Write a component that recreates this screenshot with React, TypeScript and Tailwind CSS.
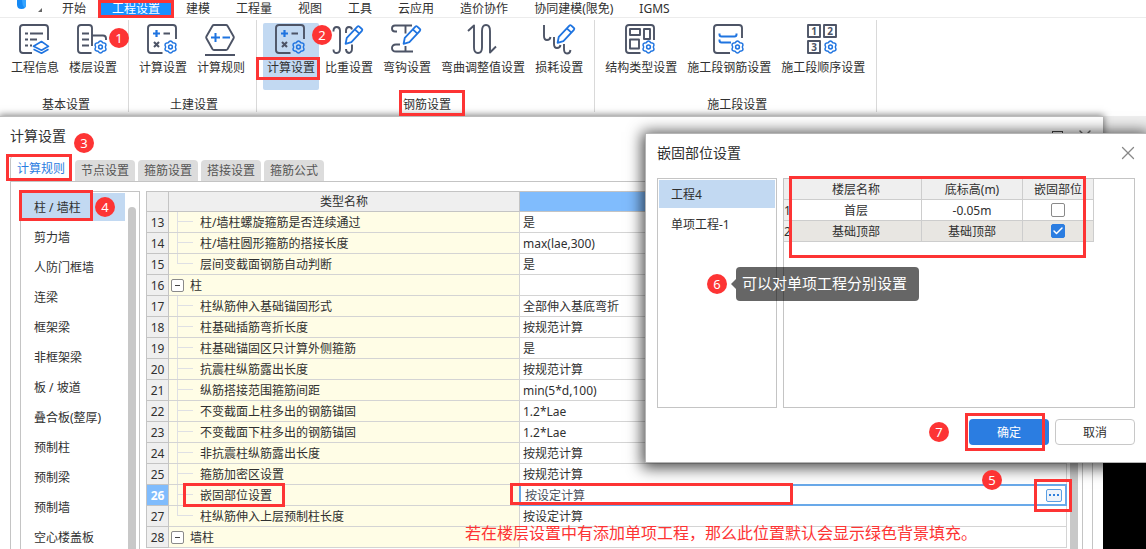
import type { ReactNode } from "react"
import { useState } from "react"
import { Check, X } from "lucide-react"
import clsx from "clsx"

const INK = "#4d5466"
const BLUE = "#1f74e0"

const menus = ["开始", "工程设置", "建模", "工程量", "视图", "工具", "云应用", "造价协作", "协同建模(限免)", "IGMS"]

const tabs = ["计算规则", "节点设置", "箍筋设置", "搭接设置", "箍筋公式"]

const components = [
  "柱 / 墙柱",
  "剪力墙",
  "人防门框墙",
  "连梁",
  "框架梁",
  "非框架梁",
  "板 / 坡道",
  "叠合板(整厚)",
  "预制柱",
  "预制梁",
  "预制墙",
  "空心楼盖板",
]

type Rule = { no: number; name: string; value?: string; group?: boolean; last?: boolean }

const rules: Rule[] = [
  { no: 13, name: "柱/墙柱螺旋箍筋是否连续通过", value: "是" },
  { no: 14, name: "柱/墙柱圆形箍筋的搭接长度", value: "max(lae,300)" },
  { no: 15, name: "层间变截面钢筋自动判断", value: "是", last: true },
  { no: 16, name: "柱", group: true },
  { no: 17, name: "柱纵筋伸入基础锚固形式", value: "全部伸入基底弯折" },
  { no: 18, name: "柱基础插筋弯折长度", value: "按规范计算" },
  { no: 19, name: "柱基础锚固区只计算外侧箍筋", value: "是" },
  { no: 20, name: "抗震柱纵筋露出长度", value: "按规范计算" },
  { no: 21, name: "纵筋搭接范围箍筋间距", value: "min(5*d,100)" },
  { no: 22, name: "不变截面上柱多出的钢筋锚固", value: "1.2*Lae" },
  { no: 23, name: "不变截面下柱多出的钢筋锚固", value: "1.2*Lae" },
  { no: 24, name: "非抗震柱纵筋露出长度", value: "按规范计算" },
  { no: 25, name: "箍筋加密区设置", value: "按规范计算" },
  { no: 26, name: "嵌固部位设置", value: "按设定计算" },
  { no: 27, name: "柱纵筋伸入上层预制柱长度", value: "按设定计算", last: true },
  { no: 28, name: "墙柱", group: true },
]

/* ---------- annotations ---------- */

function Mark({ className }: { className: string }) {
  return <span className={clsx("pointer-events-none absolute z-30 border-3 border-[#fd3434]", className)} />
}

function Badge({ n, className }: { n: number; className: string }) {
  return (
    <span
      className={clsx(
        "pointer-events-none absolute z-30 flex size-5 items-center justify-center rounded-full bg-[#fd3434] text-[13px] leading-5 text-white",
        className,
      )}
    >
      {n}
    </span>
  )
}

/* ---------- ribbon icons ---------- */

function Icon({ children }: { children: ReactNode }) {
  return (
    <svg
      viewBox="0 0 30 30"
      className="mr-0.5 size-[30px] overflow-visible"
      fill="none"
      stroke={INK}
      strokeWidth="1.9"
      strokeLinecap="butt"
      strokeLinejoin="round"
      aria-hidden="true"
    >
      {children}
    </svg>
  )
}

function Gear({ x = 23.5, y = 23 }: { x?: number; y?: number }) {
  return (
    <g transform={`translate(${x} ${y})`} stroke={BLUE} strokeWidth="1.5">
      <path d="M4.8 0Q6.93 4 2.4 4.16Q0 8-2.4 4.16Q-6.93 4-4.8 0Q-6.93-4-2.4-4.16Q0-8 2.4-4.16Q6.93-4 4.8 0Z" />
      <circle r="1.9" />
    </g>
  )
}

function Pencil({ x = 0, y = 0 }: { x?: number; y?: number }) {
  return (
    <g transform={`translate(${x} ${y})`} stroke={BLUE} strokeWidth="1.8">
      <path d="M12.6 19.8L13.8 13.8 24.4 2.6q.9-.9 1.9 0l2.6 2.4q.9.9 0 1.9L18.4 18.2z" />
      <path d="M21.8 5.4l4.6 4.3" />
    </g>
  )
}

function InfoIcon() {
  return (
    <Icon>
      <path d="M13 29H4q-3 0-3-3V4q0-3 3-3h22q3 0 3 3v12" />
      <path d="M6 9.5h3M11 9.5h13M6 15.5h3M11 15.5h7M6 21.5h3M11 21.5h2" />
      <path d="M14.5 22.3L22.5 17.5l7 4.8-7 4z M14.5 25.2l8 4 7-4" stroke={BLUE} strokeWidth="1.6" />
    </Icon>
  )
}

function FloorIcon() {
  return (
    <Icon>
      <path d="M14.5 29H4q-3 0-3-3V4q0-3 3-3h8q3 0 3 3v18M15 11.5h11q3 0 3 3v1.5" />
      <path d="M5 9.5h7M5 15.5h7M5 21.5h7" />
      <Gear />
    </Icon>
  )
}

function CalcIcon() {
  return (
    <Icon>
      <path d="M15.5 29H4q-3 0-3-3V4q0-3 3-3h22q3 0 3 3v11" />
      <path d="M6 9.5h7M9.5 6v7" stroke={BLUE} strokeWidth="2.2" />
      <path d="M16.5 9.5H23M7 18l5 5M12 18l-5 5" strokeWidth="2.1" />
      <Gear />
    </Icon>
  )
}

function RuleIcon() {
  return (
    <Icon>
      <path d="M9 1h12q1 0 1.6 1l6 10.5q.5.9 0 1.8L22.6 25q-.6 1-1.6 1H9q-1 0-1.6-1L1.4 14.3q-.5-.9 0-1.8L7.4 2Q8 1 9 1z" />
      <path d="M0 31h30" strokeWidth="2" />
      <path d="M6 13.5h9M10.5 9v9M17.5 13.5H25" stroke={BLUE} strokeWidth="2" />
    </Icon>
  )
}

function WeightIcon() {
  return (
    <Icon>
      <path d="M.5 7.5V6.5Q.5 3 3.7 3T7 6.5V24.5Q7 29 3.700 29T.5 25.500M13 9V6.500Q13 3 16 3q2.500 0 3 2.500M19 20.500v4q0 4-3 4.500-3-.5-3-4" />
      <Pencil />
    </Icon>
  )
}

function HookIcon() {
  return (
    <Icon>
      <path d="M21 1.5H4q-3 0-3 3t3 3h2M14.5 1.5v8M9 20.5H5q-4 0-4 3.5t4 3.5h17M14.5 22v5" />
      <Pencil />
    </Icon>
  )
}

function BendIcon() {
  return (
    <Icon>
      <path d="M1 7l6-5.5V23.5q0 5.500 4 5.500t4-5.500V7q0-6 4-6t4 6V28.500l6-6" />
    </Icon>
  )
}

function LossIcon() {
  return (
    <Icon>
      <path d="M1 1v11q0 4 3 4t3.5-3M11 13v7q0 4 3 4t3.5-3M21 20v5q0 4.5 3 4.5t3.5-3.5" />
      <Pencil x={2} y={-1} />
    </Icon>
  )
}

function StructureIcon() {
  return (
    <Icon>
      <path d="M15.5 29H4q-3 0-3-3V4q0-3 3-3h22q3 0 3 3v12" />
      <path d="M5 5h10v6H5zM19 5h6v10h-6zM5 15.5h9v9H5z" />
      <Gear />
    </Icon>
  )
}

function SegmentIcon() {
  return (
    <Icon>
      <path d="M17 29H4q-3 0-3-3V4q0-3 3-3h22q3 0 3 3v10" />
      <path d="M6.5 9.5v1q0 2 2 2h13q2 0 2-2v-1M6.5 15.5v1q0 2 2 2H18" stroke={BLUE} strokeWidth="2" />
      <Gear x={24.5} />
    </Icon>
  )
}

function OrderIcon() {
  return (
    <Icon>
      <path d="M1 1h12v12H1zM17 1h12v12H17zM1 17h12v12H1z" />
      <g fill={INK} stroke="none" fontSize="10" fontWeight="700" textAnchor="middle">
        <text x="7" y="10.6">1</text>
        <text x="23" y="10.6">2</text>
        <text x="7" y="26.6">3</text>
      </g>
      <Gear />
    </Icon>
  )
}

/* ---------- ribbon ---------- */

type ToolProps = { label: string; icon: ReactNode; active?: boolean; children?: ReactNode }

function Tool({ label, icon, active, children }: ToolProps) {
  return (
    <button
      type="button"
      className={clsx(
        "relative mx-px flex h-[67px] flex-col items-center rounded-xs px-1 pt-px whitespace-nowrap",
        active && "bg-[#c2d9f2]",
      )}
    >
      {icon}
      <span className="mt-1 leading-5">{label}</span>
      {children}
    </button>
  )
}

function ToolGroup({ title, marked, children }: { title: string; marked?: boolean; children: ReactNode }) {
  return (
    <div className="flex flex-col items-center border-r border-[#d9d9d9] pr-1.5 pl-[5px]">
      <div className="flex pt-[3px]">{children}</div>
      <div className="relative mt-[5px] ml-1 leading-5">
        {title}
        {marked && <Mark className="-top-[5px] -right-3.5 -left-1 h-[26px]" />}
      </div>
    </div>
  )
}

function Ribbon() {
  return (
    <header>
      <nav className="flex h-[18px] items-center border-b border-[#ececec] pl-4">
        <svg viewBox="0 0 33 18" className="h-[18px] w-[33px] shrink-0" aria-hidden="true">
          <path d="M1-4h9v8.500q0 4.500-4.500 4.500T1 4.500z" fill="#1489f5" />
          <path d="M6-4h4v8.500q0 2.500-1.500 3.500Q6 5 6 0z" fill="#36a4ff" />
          <path d="M26 8v4h-4z" fill="#666" />
        </svg>
        {menus.map((m) => (
          <button
            key={m}
            type="button"
            className={clsx("relative h-[17px] px-[13px] leading-[17px] whitespace-nowrap", m === "工程设置" && "bg-[#1890ff] text-white")}
          >
            {m}
            {m === "工程设置" && <Mark className="-inset-x-px top-0 -bottom-px" />}
          </button>
        ))}
      </nav>
      <div className="flex h-[98px] pt-0.5 pb-1 pl-px">
        <ToolGroup title="基本设置">
          <Tool label="工程信息" icon={<InfoIcon />} />
          <Tool label="楼层设置" icon={<FloorIcon />}>
            <Badge n={1} className="top-[5px] -right-2" />
          </Tool>
        </ToolGroup>
        <ToolGroup title="土建设置">
          <Tool label="计算设置" icon={<CalcIcon />} />
          <Tool label="计算规则" icon={<RuleIcon />} />
        </ToolGroup>
        <ToolGroup title="钢筋设置" marked>
          <Tool label="计算设置" icon={<CalcIcon />} active>
            <Mark className="top-[34px] -right-px -left-[7px] h-[23px]" />
            <Badge n={2} className="top-0.5 -right-[13px]" />
          </Tool>
          <Tool label="比重设置" icon={<WeightIcon />} />
          <Tool label="弯钩设置" icon={<HookIcon />} />
          <Tool label="弯曲调整值设置" icon={<BendIcon />} />
          <Tool label="损耗设置" icon={<LossIcon />} />
        </ToolGroup>
        <ToolGroup title="施工段设置">
          <Tool label="结构类型设置" icon={<StructureIcon />} />
          <Tool label="施工段钢筋设置" icon={<SegmentIcon />} />
          <Tool label="施工段顺序设置" icon={<OrderIcon />} />
        </ToolGroup>
      </div>
    </header>
  )
}

/* ---------- calculation settings window ---------- */

function TreeCell({ rule }: { rule: Rule }) {
  if (rule.group) {
    return (
      <div className="flex h-5 items-center gap-1.5 pl-0.5">
        <button
          type="button"
          aria-label="收起"
          className="flex size-[13px] items-center justify-center rounded-xs border border-[#8a8a8a] bg-white"
        >
          <span className="h-px w-[5px] bg-[#444]" />
        </button>
        <span className="pt-0.5 leading-[18px]">{rule.name}</span>
      </div>
    )
  }
  return (
    <div className="flex h-5 items-center gap-[7px] pl-2">
      <span className="grid h-full w-4 grid-rows-2">
        <span className="border-b border-l border-[#dfe0e4]" />
        <span className={clsx(!rule.last && "border-l border-[#dfe0e4]")} />
      </span>
      <span className="relative pt-0.5 leading-[18px]">
        {rule.name}
        {rule.no === 26 && <Mark className="-top-0.5 -right-[13px] -left-[17px] h-6" />}
      </span>
    </div>
  )
}

function RuleTable() {
  return (
    <table className="w-full table-fixed border-separate border-spacing-0 border-t border-l border-[#c4c4c4]">
      <colgroup>
        <col className="w-[22px]" />
        <col className="w-[351px]" />
        <col />
      </colgroup>
      <thead>
        <tr className="h-5 bg-[#efefef]">
          <th className="border-r border-b border-[#c4c4c4] p-0" />
          <th className="border-r border-b border-[#c4c4c4] p-0 pt-px leading-[18px] font-normal">类型名称</th>
          <th className="border-r border-b border-[#c4c4c4] bg-[#80bcfd] p-0" />
        </tr>
      </thead>
      <tbody>
        {rules.map((r) => {
          const current = r.no === 26
          return (
            <tr key={r.no} className="h-[21px]">
              <td
                className={clsx(
                  "border-r border-b border-[#c4c4c4] p-0 pt-0.5 text-center leading-[18px]",
                  current ? "bg-[#80bcfd] font-bold text-white" : "bg-[#efefef]",
                )}
              >
                {r.no}
              </td>
              <td className="border-r border-b border-[#d4d4d4] bg-[#fffde6] p-0">
                <TreeCell rule={r} />
              </td>
              <td className="relative border-r border-b border-[#d4d4d4] bg-white p-0 pt-0.5 pl-[3px] leading-[18px]">
                {current ? (
                  <div className="absolute -inset-px flex items-center border-2 border-[#69a9e9] pl-1">
                    <input
                      aria-label={r.name}
                      defaultValue={r.value}
                      className="h-[17px] min-w-0 flex-1 pt-px text-[#4a4f5c] outline-none"
                    />
                    <button
                      type="button"
                      aria-label="更多"
                      className="relative mr-[3px] flex h-[13px] w-4 items-center justify-center gap-0.5 rounded-xs border border-[#5b9fe3] bg-[#eef3fa]"
                    >
                      <i className="size-0.5 bg-[#2f7fdc]" />
                      <i className="size-0.5 bg-[#2f7fdc]" />
                      <i className="size-0.5 bg-[#2f7fdc]" />
                      <Mark className="-top-[11px] -right-[11px] h-[33px] w-[38px]" />
                      <Badge n={5} className="-top-5 right-[59px]" />
                    </button>
                    <Mark className="-top-[3px] -left-[11px] h-[22px] w-[283px]" />
                  </div>
                ) : (
                  r.value
                )}
              </td>
            </tr>
          )
        })}
      </tbody>
    </table>
  )
}

function CalcWindow() {
  const [tab, setTab] = useState(tabs[0])
  const [picked, setPicked] = useState(components[0])

  return (
    <section className="relative mr-[43px] flex min-h-0 flex-1 flex-col border-t border-[#bdbdbd] bg-white shadow-[0_0_7px_1px_rgba(0,0,0,0.5)]">
      <div className="flex h-[38px] items-center justify-between pr-2 pl-2.5">
        <h1 className="relative text-sm leading-5">
          计算设置
          <Badge n={3} className="top-[7px] -right-7" />
        </h1>
        <div className="flex items-center gap-3 text-[#666]">
          <button type="button" aria-label="最大化" className="size-[11px] border border-[#444]" />
          <button type="button" aria-label="关闭">
            <X size={20} strokeWidth={1.6} />
          </button>
        </div>
      </div>

      <div role="tablist" className="flex h-[26px] items-end gap-[3px] px-2.5">
        {tabs.map((t) => (
          <button
            key={t}
            type="button"
            role="tab"
            aria-selected={t === tab}
            onClick={() => setTab(t)}
            className={clsx(
              "relative h-[21px] rounded-t-sm px-1.5 leading-[21px]",
              t === tab ? "mr-px h-[25px] border-l border-[#c4c4c4] text-[#2b7de1]" : "bg-[#dcdcdc] text-[#555]",
            )}
          >
            {t}
            {t === tabs[0] && <Mark className="-top-0.5 -right-px -left-[5px] h-[27px]" />}
          </button>
        ))}
      </div>

      <div className="mx-2.5 flex min-h-0 flex-1 gap-1.5 overflow-hidden border-x border-t border-[#c4c4c4] px-[9px] pt-[9px]">
        <div className="flex w-[120px] shrink-0 border-x border-t border-[#c4c4c4] pt-px pl-px">
          <ul className="w-[103px]">
            {components.map((c) => (
              <li key={c} className="mb-0.5">
                <button
                  type="button"
                  onClick={() => setPicked(c)}
                  className={clsx("relative h-7 w-full pt-0.5 pl-3 text-left leading-[26px]", c === picked && "bg-[#c2d9f2]")}
                >
                  {c}
                  {c === components[0] && (
                    <>
                      <Mark className="-top-[3px] -left-[3px] h-[31px] w-[74px]" />
                      <Badge n={4} className="top-1 right-2.5" />
                    </>
                  )}
                </button>
              </li>
            ))}
          </ul>
          <div className="mt-3.5 ml-[3px] w-2 rounded-t-full bg-[#c8c8c8]" />
        </div>
        <div className="flex min-w-0 flex-1 items-stretch gap-[3px] border-r border-[#c4c4c4] pr-1">
          <div className="min-w-0 flex-1">
            <RuleTable />
          </div>
          <div className="w-2 bg-[#c8c8c8]" />
        </div>
      </div>

      <p className="absolute top-[408px] left-[465px] text-base leading-4 whitespace-nowrap text-[#fd3434]">
        若在楼层设置中有添加单项工程，那么此位置默认会显示绿色背景填充。
      </p>
    </section>
  )
}

/* ---------- fixed-end dialog ---------- */

function Tick({ label, checked }: { label: string; checked?: boolean }) {
  return (
    <label className="mx-auto grid size-3.5 place-items-center">
      <input
        type="checkbox"
        aria-label={label}
        defaultChecked={checked}
        className="peer col-start-1 row-start-1 size-3.5 appearance-none rounded-xs border border-[#8a8a8a] bg-white checked:border-[#2b7de1] checked:bg-[#2b7de1]"
      />
      <Check
        size={12}
        strokeWidth={3}
        className="pointer-events-none col-start-1 row-start-1 text-white opacity-0 peer-checked:opacity-100"
      />
    </label>
  )
}

function FixedDialog() {
  const floors = [
    { name: "首层", level: "-0.05m", fixed: false },
    { name: "基础顶部", level: "基础顶部", fixed: true },
  ]
  const cell = "border-r border-b border-[#cdcdcd] p-0 text-center font-normal"
  const textCell = "border-r border-b border-[#cdcdcd] p-0 pt-0.5 text-center leading-[18px] font-normal"

  return (
    <section
      role="dialog"
      aria-label="嵌固部位设置"
      className="absolute top-[133px] right-0 z-20 flex h-[330px] w-[501px] flex-col border-y border-l border-[#b5b5b5] bg-white pr-[11px] pb-[17px] pl-[11px] shadow-[0_2px_14px_3px_rgba(0,0,0,0.7)]"
    >
      <div className="flex h-11 items-center justify-between pb-1.5">
        <h2 className="text-sm leading-5">嵌固部位设置</h2>
        <button type="button" aria-label="关闭" className="-mr-1 text-[#888]">
          <X size={22} strokeWidth={1.4} />
        </button>
      </div>

      <div className="flex min-h-0 flex-1 gap-1.5">
        <ul className="relative w-[120px] shrink-0 border border-[#c4c4c4] p-px">
          <li>
            <button type="button" className="h-7 w-full bg-[#c2d9f2] pt-0.5 pl-3 text-left leading-[26px]">
              工程4
            </button>
          </li>
          <li>
            <button type="button" className="mt-0.5 h-7 w-full pt-0.5 pl-3 text-left leading-[26px]">
              单项工程-1
            </button>
          </li>
          <li className="absolute top-[88px] left-[78px] z-20 rounded-sm bg-black/60 pr-3 pb-0.5 pl-1.5 text-[15px] leading-8 whitespace-nowrap text-white">
            <span className="absolute top-3 -left-[5px] h-0 w-0 border-y-5 border-r-5 border-y-transparent border-r-black/60" />
            可以对单项工程分别设置
            <Badge n={6} className="top-[7px] -left-[29px]" />
          </li>
        </ul>

        <div className="relative flex-1 border border-[#c4c4c4]">
          <table className="w-[310px] table-fixed border-separate border-spacing-0">
            <colgroup>
              <col className="w-[7px]" />
              <col className="w-[131px]" />
              <col className="w-[101px]" />
              <col />
            </colgroup>
            <thead>
              <tr className="h-[21px] bg-[#efefef]">
                <th className={cell} />
                <th className={textCell}>楼层名称</th>
                <th className={textCell}>底标高(m)</th>
                <th className={textCell}>嵌固部位</th>
              </tr>
            </thead>
            <tbody>
              {floors.map((f, i) => (
                <tr key={f.name} className={clsx("h-[21px]", f.fixed && "bg-[#e8e6e2]")}>
                  <td className={clsx(textCell, "bg-[#efefef]")}>{i + 1}</td>
                  <td className={textCell}>{f.name}</td>
                  <td className={textCell}>{f.level}</td>
                  <td className={cell}>
                    <Tick label={f.name} checked={f.fixed} />
                  </td>
                </tr>
              ))}
            </tbody>
          </table>
          <Mark className="-top-[3px] left-[5px] h-[82px] w-[297px]" />
        </div>
      </div>

      <div className="mt-[11px] flex justify-end gap-1.5">
        <button type="button" className="relative h-[26px] w-20 rounded-sm bg-[#2b7de1] pt-0.5 text-white">
          确定
          <Mark className="-top-1.5 -left-1 h-[38px] w-20" />
          <Badge n={7} className="top-[3px] -left-10" />
        </button>
        <button type="button" className="h-[26px] w-20 rounded-sm border border-[#c8c8c8] bg-white pt-0.5">
          取消
        </button>
      </div>
    </section>
  )
}

export default function App() {
  return (
    <div className="relative flex h-screen flex-col overflow-hidden bg-white font-['Noto_Sans','Noto_Sans_CJK_SC',sans-serif] text-xs text-[#303030]">
      <Ribbon />
      <main className="flex min-h-0 flex-1 flex-col bg-[linear-gradient(#efefef_18px,#000_18px)]">
        <CalcWindow />
      </main>
      <FixedDialog />
    </div>
  )
}
